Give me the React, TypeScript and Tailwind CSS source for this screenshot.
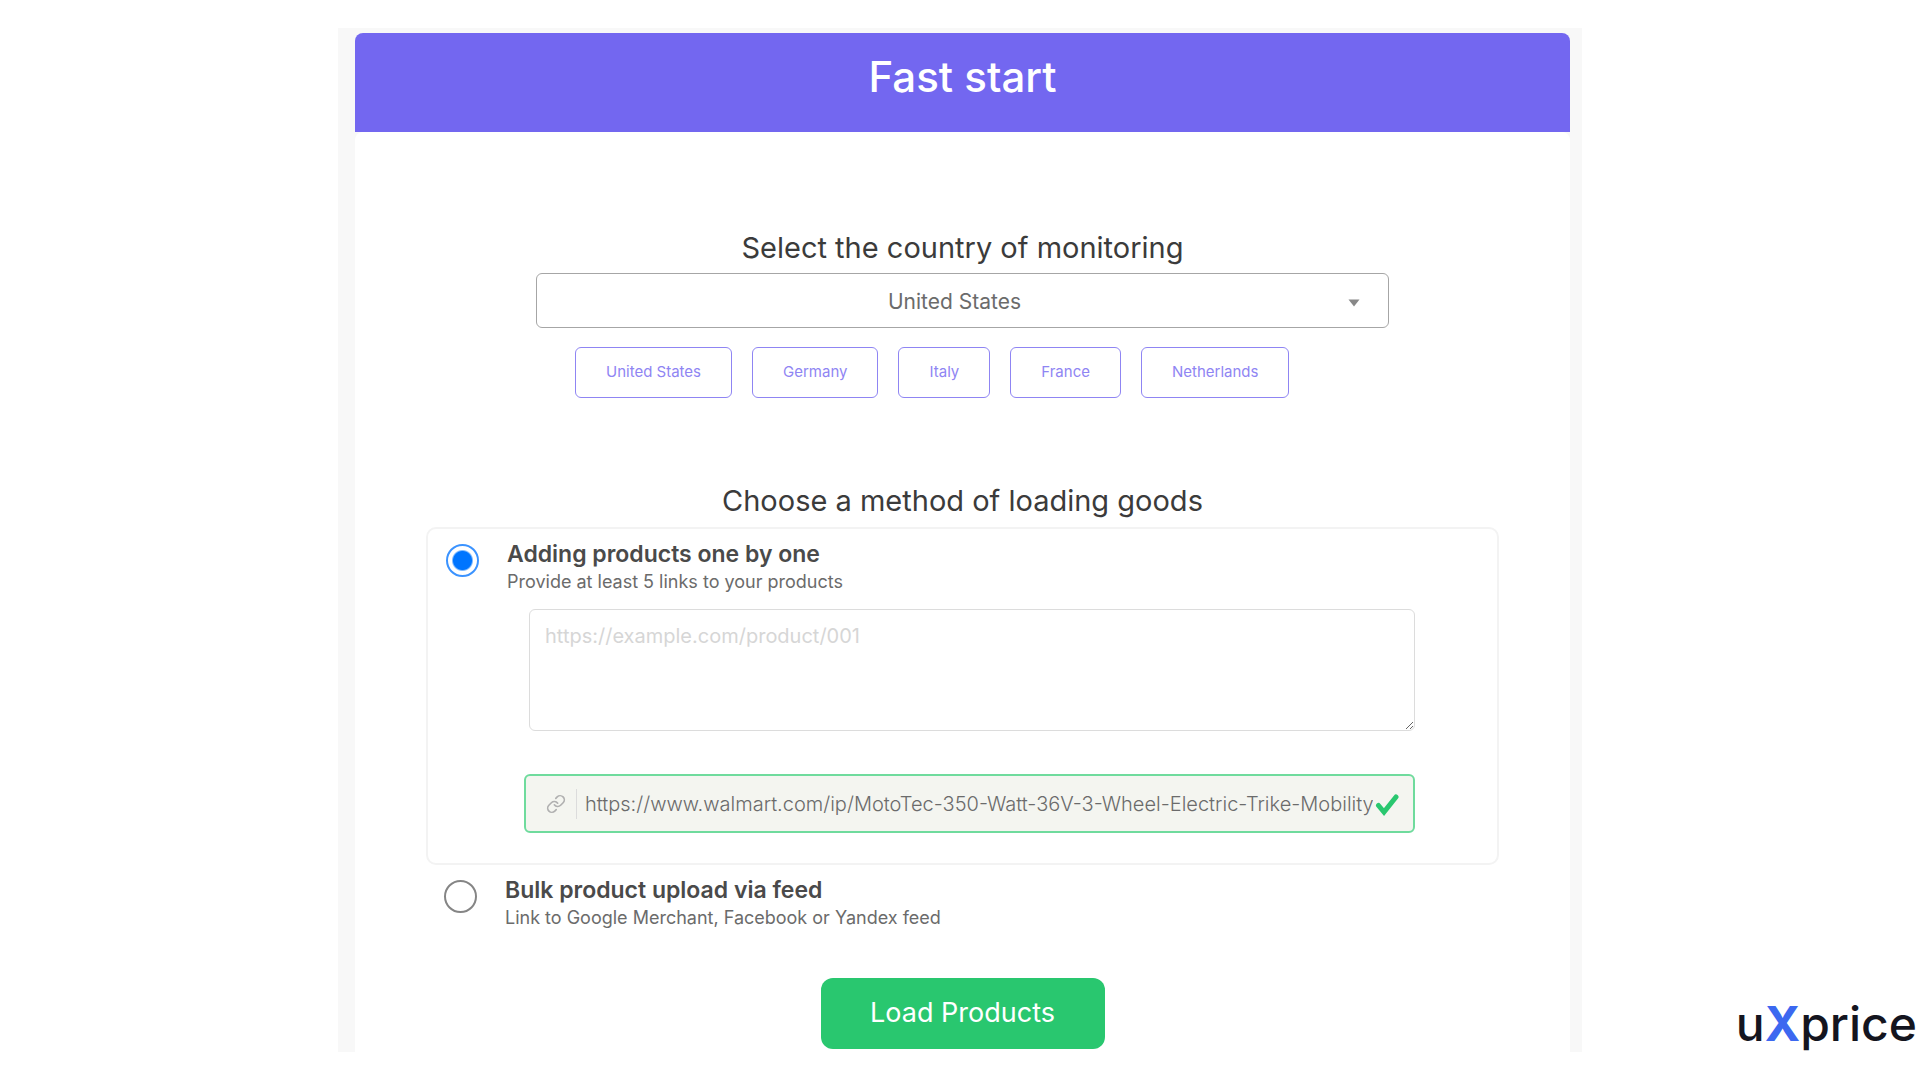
import { useState } from 'react';
import { Link } from 'lucide-react';

const countries = ['United States', 'Germany', 'Italy', 'France', 'Netherlands'];

const radioClass =
  'mt-1 size-[33px] shrink-0 appearance-none rounded-full border-2 border-[#858585] bg-white checked:border-[#3b93ff] checked:bg-[radial-gradient(circle,#0075ff_9px,white_11px)]';

function CountrySection() {
  const [country, setCountry] = useState('United States');

  return (
    <section className="mx-auto w-full max-w-[853px] pt-[100px]">
      <label htmlFor="country" className="block text-center text-[29px] leading-8 text-[#3b3b3b]">
        Select the country of monitoring
      </label>
      <div className="relative mt-[9px]">
        <select
          id="country"
          value={country}
          onChange={(e) => setCountry(e.target.value)}
          className="h-[55px] w-full appearance-none rounded-md border border-[#a6a6a6] bg-white pt-0.5 pr-4 text-center text-[21px] text-[#6b6b6b]"
        >
          {countries.map((name) => (
            <option key={name}>{name}</option>
          ))}
        </select>
        <svg viewBox="0 0 12 8" className="pointer-events-none absolute top-[26px] right-[29px] h-2 w-3" fill="#888">
          <path d="M0.5 0.5h11L6 7.5z" />
        </svg>
      </div>
      <div className="mt-[19px] flex flex-wrap gap-5 pl-[39px]">
        {countries.map((name) => (
          <button
            key={name}
            type="button"
            onClick={() => setCountry(name)}
            className="h-[51px] rounded-md border border-[#8f85f3] px-[30px] text-[15px] text-[#8f85f3]"
          >
            {name}
          </button>
        ))}
      </div>
    </section>
  );
}

function MethodSection() {
  return (
    <fieldset className="w-full px-[71px] pt-[87px]">
      <legend className="contents">
        <span className="block text-center text-[29px] leading-8 text-[#3b3b3b]">
          Choose a method of loading goods
        </span>
      </legend>

      <div className="mt-2.5 rounded-[10px] border-2 border-[#f3f3f3] pt-[11px] pr-[82px] pb-[30px] pl-[18px]">
        <div className="flex gap-7">
          <input id="one-by-one" type="radio" name="method" defaultChecked className={radioClass} />
          <label htmlFor="one-by-one">
            <span className="block text-[23px] leading-7 font-semibold text-[#4a4a4a]">Adding products one by one</span>
            <span className="mt-0.5 block text-lg leading-6 text-[#6b6b6b]">
              Provide at least 5 links to your products
            </span>
          </label>
        </div>
        <div className="pl-[78px]">
          <textarea
            aria-label="Product links"
            placeholder="https://example.com/product/001"
            className="mt-[15px] ml-[5px] block h-[122px] w-[calc(100%-5px)] rounded-md border border-[#dcdcdc] px-[15px] py-3 text-xl text-[#6b6b6b] placeholder:text-[#d6d6d6]"
          />
          <div className="mt-[43px] flex h-[59px] items-center rounded-md border-2 border-[#6fdb9d] bg-[#f4f5f0] pr-3.5 pl-5">
            <Link className="size-5 text-[#b0b0b0]" strokeWidth={2} />
            <span className="ml-2.5 h-[30px] w-px bg-[#dcdcdc]" />
            <input
              type="text"
              aria-label="Product link"
              defaultValue="https://www.walmart.com/ip/MotoTec-350-Watt-36V-3-Wheel-Electric-Trike-Mobility-Scooter"
              className="ml-2 min-w-0 flex-1 bg-transparent text-xl font-light text-[#6b6b6b]"
            />
            <svg viewBox="0 0 24 24" className="ml-0.5 size-6" fill="none" stroke="#29c76f" strokeWidth="5" strokeLinecap="round">
              <path d="M3.5 13.5l5.500 6.500L21 5" />
            </svg>
          </div>
        </div>
      </div>

      <div className="mt-[11px] flex gap-7 pl-[18px]">
        <input id="bulk" type="radio" name="method" className={radioClass} />
        <label htmlFor="bulk">
          <span className="block text-[23px] leading-7 font-semibold text-[#4a4a4a]">Bulk product upload via feed</span>
          <span className="mt-0.5 block text-lg leading-6 text-[#6b6b6b]">
            Link to Google Merchant, Facebook or Yandex feed
          </span>
        </label>
      </div>
    </fieldset>
  );
}

export default function App() {
  return (
    <div className="grid grid-cols-[1fr_minmax(0,1244px)_1fr] bg-white pt-7 font-['Inter',sans-serif]">
      <main className="col-start-2 bg-[#f8f8f8] pt-[5px] pr-3 pl-[17px]">
        <h1 className="rounded-t-lg bg-[#7367f0] pt-[14px] pb-[25px] text-center text-[42px] leading-[60px] font-medium text-white">
          Fast start
        </h1>
        <form className="flex flex-col rounded-t-lg bg-white pb-[3px]" onSubmit={(e) => e.preventDefault()}>
          <CountrySection />
          <MethodSection />
          <button
            type="submit"
            className="mt-12 h-[71px] w-[284px] self-center rounded-xl bg-[#29c76f] text-[27px] text-white"
          >
            Load Products
          </button>
        </form>
      </main>
      <a href="#" className="self-end justify-self-end pr-[3px] pb-1 text-5xl font-medium text-[#14151f]">
        u<span className="font-bold text-[#3c68f0]">X</span>price
      </a>
    </div>
  );
}
